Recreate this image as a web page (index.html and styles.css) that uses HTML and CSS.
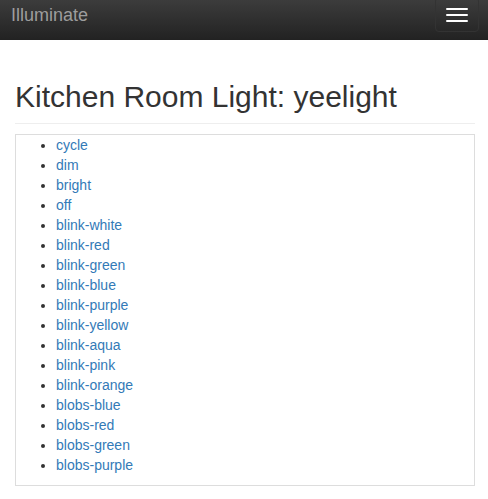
FILE: index.html
```html
<!DOCTYPE html>
<html>
<head>
<meta charset="utf-8">
<link rel="stylesheet" href="styles.css">
</head>
<body>
<nav class="navbar">
  <a class="brand" href="#">Illuminate</a>
  <button class="toggle" type="button">
    <span class="bar"></span>
    <span class="bar"></span>
    <span class="bar"></span>
  </button>
</nav>
<div class="container">
  <h1 class="page-header">Kitchen Room Light: yeelight</h1>
  <div class="panel">
    <ul class="actions">
      <li><a href="#">cycle</a></li>
      <li><a href="#">dim</a></li>
      <li><a href="#">bright</a></li>
      <li><a href="#">off</a></li>
      <li><a href="#">blink-white</a></li>
      <li><a href="#">blink-red</a></li>
      <li><a href="#">blink-green</a></li>
      <li><a href="#">blink-blue</a></li>
      <li><a href="#">blink-purple</a></li>
      <li><a href="#">blink-yellow</a></li>
      <li><a href="#">blink-aqua</a></li>
      <li><a href="#">blink-pink</a></li>
      <li><a href="#">blink-orange</a></li>
      <li><a href="#">blobs-blue</a></li>
      <li><a href="#">blobs-red</a></li>
      <li><a href="#">blobs-green</a></li>
      <li><a href="#">blobs-purple</a></li>
    </ul>
  </div>
</div>
</body>
</html>
```

FILE: styles.css
```css
* { box-sizing: border-box; }
html, body { margin: 0; padding: 0; }
body {
  font-family: "Liberation Sans", Arial, sans-serif;
  font-size: 14px;
  line-height: 20px;
  color: #333;
  background: #fff;
}
.navbar {
  height: 40px;
  background: linear-gradient(to bottom, #3c3c3c 0, #222 100%);
  display: flex;
  align-items: flex-start;
  justify-content: space-between;
  overflow: hidden;
}
.brand {
  font-size: 18px;
  line-height: 20px;
  color: #9d9d9d;
  text-decoration: none;
  padding: 5px 0 0 11px;
}
.toggle {
  margin: -3px 9px 0 0;
  width: 44px;
  height: 35px;
  padding: 10px 10px 0;
  border: 1px solid #333;
  border-radius: 4px;
  background: transparent;
  display: flex;
  flex-direction: column;
  gap: 4px;
}
.bar {
  display: block;
  width: 22px;
  height: 2px;
  background: #fff;
  border-radius: 1px;
}
.container {
  padding: 0 13px 0 15px;
}
.page-header {
  margin: 40px 0 10px;
  padding-bottom: 10px;
  border-bottom: 1px solid #eee;
  font-size: 30px;
  font-weight: 500;
  line-height: 33px;
  color: #333;
}
.panel {
  border: 1px solid #ddd;
}
.actions {
  margin: 0 0 10px;
  padding-left: 40px;
}
.actions a {
  color: #337ab7;
  text-decoration: none;
}
```
